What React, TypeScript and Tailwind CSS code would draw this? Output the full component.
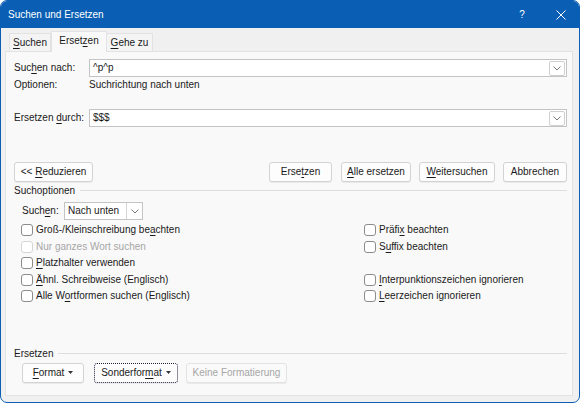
import React from 'react';

const font = "font-['Segoe_UI','Liberation_Sans',Arial,sans-serif]";

function U({ children }: { children: React.ReactNode }) {
  return <span className="underline decoration-[1px] underline-offset-[2px]">{children}</span>;
}

function Chevron() {
  return (
    <svg width="8" height="5" viewBox="0 0 8 5" fill="none">
      <path d="M0.5 0.5 L4 4 L7.5 0.5" stroke="#7a7a7a" strokeWidth="1" />
    </svg>
  );
}

function Caret() {
  return (
    <svg width="5" height="3" viewBox="0 0 5 3" className="ml-[4px]">
      <path d="M0 0 H5 L2.5 3 Z" fill="#333" />
    </svg>
  );
}

function ComboInput({ value }: { value: string }) {
  return (
    <div className="flex-1 h-[18px] bg-white border border-[#c4c4c4] flex items-center pl-[3px] pr-[1px]">
      <span className="flex-1 text-[#1a1a1a]">{value}</span>
      <div className="w-[16px] h-[15px] border border-[#cfcfcf] rounded-[2px] flex items-center justify-center">
        <Chevron />
      </div>
    </div>
  );
}

function Btn({
  children,
  w,
  disabled,
  focused,
}: {
  children: React.ReactNode;
  w: string;
  disabled?: boolean;
  focused?: boolean;
}) {
  const border = focused
    ? 'border-dotted border-[#202040]'
    : disabled
      ? 'border-[#e3e3e3]'
      : 'border-[#d3d3d3]';
  return (
    <div
      className={`${w} h-[20px] rounded-[3px] border ${border} ${disabled ? 'bg-[#fafafa] text-[#a6a6a6]' : 'bg-[#fdfdfd] text-[#1a1a1a]'} flex items-center justify-center shadow-[0_1px_0_rgba(0,0,0,0.06)]`}
    >
      {children}
    </div>
  );
}

function Check({ children, disabled }: { children?: React.ReactNode; disabled?: boolean }) {
  return (
    <div className="h-[16.5px] flex items-center">
      {children !== undefined && (
        <>
          <div
            className={`w-[12px] h-[12px] rounded-[3px] border bg-white ${disabled ? 'border-[#d6d6d6]' : 'border-[#8c8c8c]'}`}
          />
          <span className={`ml-[3px] ${disabled ? 'text-[#a6a6a6]' : 'text-[#1a1a1a]'}`}>{children}</span>
        </>
      )}
    </div>
  );
}

function GroupLabel({ children }: { children: React.ReactNode }) {
  return (
    <div className="h-[15px] pt-[2px] flex items-center text-[#1a1a1a]">
      <span>{children}</span>
      <div className="flex-1 ml-[5px] h-[2px] border-t border-[#dedede] border-b-white" />
    </div>
  );
}

export default function App() {
  return (
    <div className={`${font} text-[10px] leading-none w-[580px] h-[403px] bg-[#f0f0f0] border border-[#0a5fb4] rounded-[7px] overflow-hidden flex flex-col`}>
      {/* title bar */}
      <div className="h-[27px] bg-[#0a5fb4] flex items-center text-white pl-[7px] shrink-0">
        <span className="flex-1">Suchen und Ersetzen</span>
        <span className="w-[12px] text-center text-[10px] mr-[28px]">?</span>
        <svg width="10" height="10" viewBox="0 0 10 10" className="mr-[13px]">
          <path d="M0.5 0.5 L9.5 9.5 M9.5 0.5 L0.5 9.5" stroke="white" strokeWidth="1" />
        </svg>
      </div>

      <div className="flex-1 flex flex-col pl-[4px] pr-[6px] pb-[6px]">
        {/* tabs */}
        <div className="h-[23px] flex items-end pl-[4px] shrink-0 relative z-10">
          <div className="h-[18px] w-[42px] border border-b-0 border-[#e2e2e2] bg-[#f4f4f4] flex items-center justify-center text-[#1a1a1a]">
            <span><U>S</U>uchen</span>
          </div>
          <div className="h-[21px] w-[56px] -mb-px border border-b-0 border-[#e2e2e2] bg-[#f9f9f9] flex items-center justify-center text-[#1a1a1a] pb-[2px]">
            <span>Erset<U>z</U>en</span>
          </div>
          <div className="h-[18px] w-[46px] border border-b-0 border-l-0 border-[#e2e2e2] bg-[#f4f4f4] flex items-center justify-center text-[#1a1a1a]">
            <span><U>G</U>ehe zu</span>
          </div>
        </div>

        {/* panel */}
        <div className="flex-1 bg-[#f9f9f9] border border-[#e2e2e2] pl-[8px] pr-[5px] pt-[7px] flex flex-col text-[#1a1a1a]">
          <div className="flex items-center">
            <span className="w-[75px]">Suc<U>h</U>en nach:</span>
            <ComboInput value="^p^p" />
          </div>
          <div className="flex items-center h-[13px] mt-[1px]">
            <span className="w-[75px]">Optionen:</span>
            <span>Suchrichtung nach unten</span>
          </div>
          <div className="flex items-center mt-[18px]">
            <span className="w-[75px]">Ersetzen <U>d</U>urch:</span>
            <ComboInput value="$$$" />
          </div>

          <div className="flex items-center mt-[35px]">
            <Btn w="w-[79px]">
              <span>&lt;&lt; <U>R</U>eduzieren</span>
            </Btn>
            <div className="flex-1" />
            <Btn w="w-[63px]">
              <span>Erse<U>t</U>zen</span>
            </Btn>
            <div className="w-[9px]" />
            <Btn w="w-[70px]">
              <span><U>A</U>lle ersetzen</span>
            </Btn>
            <div className="w-[8px]" />
            <Btn w="w-[76px]">
              <span><U>W</U>eitersuchen</span>
            </Btn>
            <div className="w-[8px]" />
            <Btn w="w-[64px]">
              <span>Abbrechen</span>
            </Btn>
          </div>

          <GroupLabel>Suchoptionen</GroupLabel>

          <div className="pl-[8px] flex flex-col">
            <div className="flex items-center mt-[5px]">
              <span className="w-[42px]">Such<U>e</U>n:</span>
              <div className="w-[79px] h-[18px] bg-white border border-[#c4c4c4] flex items-center">
                <span className="flex-1 pl-[3px]">Nach unten</span>
                <div className="w-[16px] h-full border-l border-[#d4d4d4] flex items-center justify-center">
                  <Chevron />
                </div>
              </div>
            </div>

            <div className="grid grid-cols-[343px_1fr] mt-[2px] -ml-[1px]">
              <div className="flex flex-col">
                <Check>Groß-/Kleinschreibung be<U>a</U>chten</Check>
                <Check disabled>Nur ganzes Wort suchen</Check>
                <Check><U>P</U>latzhalter verwenden</Check>
                <Check><U>Ä</U>hnl. Schreibweise (Englisch)</Check>
                <Check>Alle W<U>o</U>rtformen suchen (Englisch)</Check>
              </div>
              <div className="flex flex-col">
                <Check>Präfi<U>x</U> beachten</Check>
                <Check>S<U>u</U>ffix beachten</Check>
                <Check />
                <Check><U>I</U>nterpunktionszeichen ignorieren</Check>
                <Check><U>L</U>eerzeichen ignorieren</Check>
              </div>
            </div>
          </div>

          <div className="mt-[41px]">
            <GroupLabel>Ersetzen</GroupLabel>
          </div>

          <div className="flex items-center mt-[2px] pl-[8px]">
            <Btn w="w-[62px]">
              <span><U>F</U>ormat</span>
              <Caret />
            </Btn>
            <div className="w-[10px]" />
            <Btn w="w-[84px]" focused>
              <span>Sonderfor<U>m</U>at</span>
              <Caret />
            </Btn>
            <div className="w-[8px]" />
            <Btn w="w-[101px]" disabled>
              <span>Keine Formatierung</span>
            </Btn>
          </div>
        </div>
      </div>
    </div>
  );
}
